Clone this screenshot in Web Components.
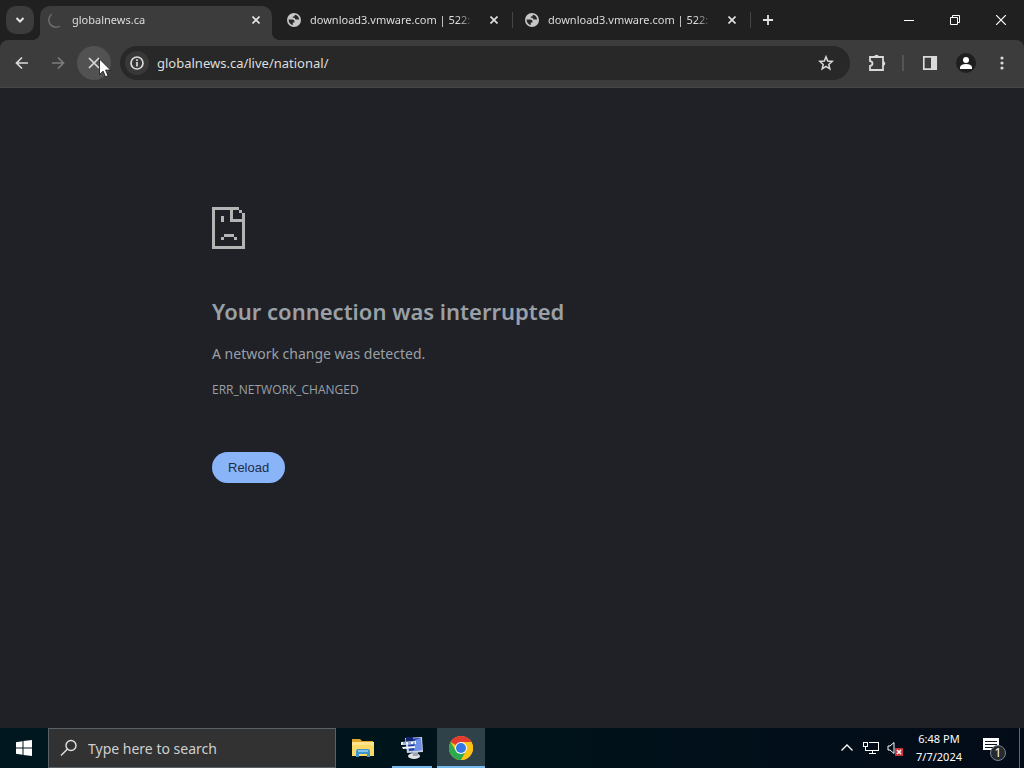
<!DOCTYPE html>
<html lang="en">
<head>
<meta charset="utf-8">
<title>globalnews.ca</title>
<style>
    html, body {
        height: 100%;
        margin: 0;
    }

    body {
        overflow: hidden;
        background-color: #202124;
        font-family: "Noto Sans", "Open Sans", sans-serif;
    }
</style>
</head>
<body>
<desktop-screen>
    <browser-window>
        <tab-strip slot="tabs">
            <browser-tab title="globalnews.ca" active loading></browser-tab>
            <browser-tab title="download3.vmware.com | 522:"></browser-tab>
            <browser-tab title="download3.vmware.com | 522:"></browser-tab>
        </tab-strip>
        <browser-toolbar slot="toolbar" url="globalnews.ca/live/national/"></browser-toolbar>
        <error-page heading="Your connection was interrupted" code="ERR_NETWORK_CHANGED">A network change was detected.</error-page>
    </browser-window>
    <task-bar slot="taskbar">
        <task-button label="File Explorer">
            <svg width="22" height="20" viewBox="0 0 22 20">
                <path d="M0 1h8l2 2h11v4H0z" fill="#e0a52b"/>
                <path d="M0 4h22v14H0z" fill="#fbd967"/>
                <path d="M0 4h22v3H0z" fill="#fde58f"/>
                <path d="M4 19v-6q0-2 2-2h10q2 0 2 2v6h-3v-3H7v3z" fill="#3f94cf"/>
                <path d="M6 12h10v2H6z" fill="#82c4e8"/>
            </svg>
        </task-button>
        <task-button label="Remote Desktop" running>
            <svg width="24" height="24" viewBox="0 0 24 24">
                <ellipse cx="14" cy="20" rx="6" ry="3" fill="#e0e3e6"/>
                <path d="M12 15l6-1v6h-5z" fill="#9ca5b0"/>
                <path d="M5 2l17-1 1 15-16 1z" fill="#c5cfe6"/>
                <path d="M7 3l13-1 1 12-12 1z" fill="#1c3ea8"/>
                <path d="M15 4l6-2 1 12-8 1z" fill="#6d90e4"/>
                <path d="M6 1h7v5H6z" fill="#10246f"/>
                <path d="M1 6l15-1v3L1 9zM2 11l13-1v2L3 13z" fill="#eef3fc"/>
                <path d="M3 7h3M8 7h3M13 7h2" stroke="#3d61bb"/>
            </svg>
        </task-button>
        <task-button label="Google Chrome" running active>
            <svg width="24" height="24" viewBox="0 0 24 24">
                <circle cx="12" cy="12" r="12" fill="#fbc116"/>
                <path d="M12 12L1.6 6A12 12 0 0 1 22.4 6H12z" fill="#e33b2e"/>
                <path d="M1.6 6A12 12 0 0 0 12 24l5.2-9L12 12 6.8 15z" fill="#2da94f"/>
                <path d="M22.4 6H12l5.2 9L12 24A12 12 0 0 0 22.4 6z" fill="#fbc116"/>
                <circle cx="12" cy="12" r="6" fill="#fff"/>
                <circle cx="12" cy="12" r="5" fill="#3478e5"/>
            </svg>
        </task-button>
    </task-bar>
    <mouse-pointer slot="pointer"></mouse-pointer>
</desktop-screen>

<script>
/**
 * DesktopScreen - Stacks the open window above the task bar
 */
class DesktopScreen extends HTMLElement {
    constructor() {
        super();
        this.attachShadow({ mode: 'open' });
        this.shadowRoot.innerHTML = `
            <style>
                :host {
                    display: flex;
                    flex-direction: column;
                    position: relative;
                    height: 100%;
                }

                .workspace {
                    display: flex;
                    flex-direction: column;
                    flex: 1;
                    min-height: 0;
                }
            </style>
            <div class="workspace"><slot></slot></div>
            <slot name="taskbar"></slot>
            <slot name="pointer"></slot>
        `;
    }
}

/**
 * BrowserWindow - Tabs, toolbar and the page below them
 */
class BrowserWindow extends HTMLElement {
    constructor() {
        super();
        this.attachShadow({ mode: 'open' });
        this.shadowRoot.innerHTML = `
            <style>
                :host {
                    display: flex;
                    flex-direction: column;
                    flex: 1;
                    min-height: 0;
                    background-color: #202020;
                }

                main {
                    flex: 1;
                    overflow: hidden;
                    background-color: #202127;
                }
            </style>
            <slot name="tabs"></slot>
            <slot name="toolbar"></slot>
            <main><slot></slot></main>
        `;
    }
}

/**
 * TabStrip - Row of tabs with the window controls at the right
 */
class TabStrip extends HTMLElement {
    constructor() {
        super();
        this.attachShadow({ mode: 'open' });
        this.shadowRoot.innerHTML = `
            <style>
                :host {
                    display: flex;
                    align-items: flex-start;
                    height: 40px;
                    background-color: #202020;
                }

                button {
                    display: flex;
                    align-items: center;
                    justify-content: center;
                    flex: none;
                    padding: 0;
                    border: none;
                    background-color: transparent;
                    color: #e3e3e3;
                }

                svg {
                    fill: none;
                    stroke: currentColor;
                }

                .search {
                    width: 28px;
                    height: 28px;
                    margin: 6px;
                    border-radius: 10px;
                    background-color: #3c3c3c;
                }

                .tabs {
                    display: flex;
                    gap: 6px;
                    min-width: 0;
                    padding-top: 6px;
                }

                .new-tab {
                    width: 28px;
                    height: 28px;
                    margin: 6px;
                }

                .controls {
                    display: flex;
                    margin-left: auto;
                }

                .controls button {
                    width: 46px;
                    height: 40px;
                    color: #ffffff;
                }
            </style>
            <button class="search" aria-label="Search tabs">
                <svg width="10" height="8" viewBox="0 0 10 8" stroke-width="2"><path d="M1.5 2L5 5.5 8.5 2"/></svg>
            </button>
            <div class="tabs"><slot></slot></div>
            <button class="new-tab" aria-label="New tab">
                <svg width="12" height="12" viewBox="0 0 12 12" stroke-width="1.8"><path d="M6 1v10M1 6h10"/></svg>
            </button>
            <div class="controls">
                <button aria-label="Minimize">
                    <svg width="10" height="10" viewBox="0 0 10 10"><path d="M0 5.5h10"/></svg>
                </button>
                <button aria-label="Restore">
                    <svg width="10" height="10" viewBox="0 0 10 10"><path d="M.5 2.5h7v7h-7zM2.5 2.500v-2h7v7h-2"/></svg>
                </button>
                <button aria-label="Close">
                    <svg width="10" height="10" viewBox="0 0 10 10" stroke-width="1.2"><path d="M0 0l10 10M10 0L0 10"/></svg>
                </button>
            </div>
        `;
    }
}

/**
 * BrowserTab - One tab: icon or spinner, title, close button
 */
class BrowserTab extends HTMLElement {
    constructor() {
        super();
        this.attachShadow({ mode: 'open' });
    }

    connectedCallback() {
        this._render();
    }

    _render() {
        const title = this.getAttribute('title') || '';
        const loading = this.hasAttribute('loading');

        this.shadowRoot.innerHTML = `
            <style>
                :host {
                    display: flex;
                    align-items: center;
                    flex: 0 1 232px;
                    width: 232px;
                    min-width: 0;
                    height: 28px;
                    padding: 0 8px;
                    box-sizing: border-box;
                    position: relative;
                    color: #dcdcdc;
                    font-size: 11px;
                }

                :host([active]) {
                    height: 34px;
                    padding-bottom: 6px;
                    border-radius: 10px 10px 0 0;
                    background-color: #3c3c3c;
                }

                /* Flared feet of the active tab */
                :host([active])::before,
                :host([active])::after {
                    content: "";
                    position: absolute;
                    bottom: 0;
                    width: 8px;
                    height: 8px;
                }

                :host([active])::before {
                    right: 100%;
                    background: radial-gradient(circle at 0 0, transparent 8px, #3c3c3c 8px);
                }

                :host([active])::after {
                    left: 100%;
                    background: radial-gradient(circle at 100% 0, transparent 8px, #3c3c3c 8px);
                }

                /* Divider on the right of an inactive tab */
                :host(:not([active]))::after {
                    content: "";
                    position: absolute;
                    left: calc(100% + 2px);
                    top: 6px;
                    width: 1px;
                    height: 16px;
                    background-color: #454545;
                }

                .icon {
                    flex: none;
                    margin-right: 8px;
                }

                .title {
                    flex: 1;
                    overflow: hidden;
                    white-space: nowrap;
                    line-height: 18px;
                    -webkit-mask-image: linear-gradient(to left, transparent, #000 16px);
                    mask-image: linear-gradient(to left, transparent, #000 16px);
                }

                button {
                    display: flex;
                    align-items: center;
                    justify-content: center;
                    flex: none;
                    width: 16px;
                    height: 16px;
                    margin-left: 12px;
                    padding: 0;
                    border: none;
                    background-color: transparent;
                    color: #e3e3e3;
                }
            </style>
            ${loading ? `
                <svg class="icon" width="16" height="16" viewBox="0 0 16 16" fill="none" stroke="#6c6c6c" stroke-width="1.5">
                    <path d="M4 2A7 7 0 0 0 12 14"/>
                </svg>
            ` : `
                <svg class="icon" width="16" height="16" viewBox="0 0 16 16">
                    <circle cx="8" cy="8" r="7" fill="#c7c7c7"/>
                    <path d="M2.500 7.500h4q2 0 2 2v1H6.800V13q-3.800-.6-4.300-5.500zM9 2.800q3.500.7 4.200 4.700h-3.700l-1-1.800H6.800V4.500h1.400z" fill="#292929"/>
                </svg>
            `}
            <span class="title">${title}</span>
            <button aria-label="Close tab">
                <svg width="8" height="8" viewBox="0 0 8 8" stroke="currentColor" stroke-width="1.6"><path d="M.5.5l7 7M7.5.5l-7 7"/></svg>
            </button>
        `;
    }
}

/**
 * ToolButton - Round icon button; the icon goes in the slot
 */
class ToolButton extends HTMLElement {
    constructor() {
        super();
        this.attachShadow({ mode: 'open' });
        this.shadowRoot.innerHTML = `
            <style>
                :host {
                    display: block;
                    flex: none;
                    color: #dadada;
                }

                :host([disabled]) {
                    color: #7d7d7d;
                }

                button {
                    display: flex;
                    align-items: center;
                    justify-content: center;
                    width: 34px;
                    height: 34px;
                    padding: 0;
                    border: none;
                    border-radius: 50%;
                    background-color: transparent;
                    color: inherit;
                }

                :host([hovered]) button {
                    background-color: #525252;
                }
            </style>
            <button aria-label="${this.getAttribute('label') || ''}"><slot></slot></button>
        `;
        this.shadowRoot.querySelector('button').disabled = this.hasAttribute('disabled');
    }
}

/**
 * BrowserToolbar - Navigation buttons, address box and browser actions
 */
class BrowserToolbar extends HTMLElement {
    constructor() {
        super();
        this.attachShadow({ mode: 'open' });
    }

    connectedCallback() {
        this._render();
    }

    _render() {
        const url = this.getAttribute('url') || '';

        this.shadowRoot.innerHTML = `
            <style>
                :host {
                    display: flex;
                    align-items: center;
                    gap: 2px;
                    height: 48px;
                    padding: 0 5px 1px;
                    box-sizing: border-box;
                    border-bottom: 1px solid #474747;
                    border-radius: 8px 8px 0 0;
                    background-color: #3c3c3c;
                }

                .address {
                    display: flex;
                    align-items: center;
                    flex: 1;
                    min-width: 0;
                    height: 34px;
                    margin: 0 8px 0 7px;
                    padding: 0 7px 0 5px;
                    box-sizing: border-box;
                    border-radius: 17px;
                    background-color: #282828;
                }

                .address button {
                    display: flex;
                    align-items: center;
                    justify-content: center;
                    flex: none;
                    width: 24px;
                    height: 24px;
                    padding: 0;
                    border: none;
                    border-radius: 50%;
                    background-color: transparent;
                    color: #dadada;
                }

                .address .site-info {
                    background-color: #383838;
                }

                .address .star {
                    width: 34px;
                }

                input {
                    flex: 1;
                    min-width: 0;
                    padding: 0 8px;
                    border: none;
                    outline: none;
                    background-color: transparent;
                    color: #dedede;
                    font-family: inherit;
                    font-size: 13px;
                }

                .divider {
                    width: 2px;
                    height: 16px;
                    margin: 0 7px 0 6px;
                    background-color: #555555;
                }

                svg {
                    display: block;
                    fill: none;
                    stroke: currentColor;
                }

                .solid {
                    stroke: none;
                }
            </style>
            <tool-button label="Back">
                <svg width="14" height="14" viewBox="0 0 14 14" stroke-width="1.7"><path d="M13 7H2M7 1.500L1.500 7 7 12.500"/></svg>
            </tool-button>
            <tool-button label="Forward" disabled>
                <svg width="14" height="14" viewBox="0 0 14 14" stroke-width="1.7"><path d="M1 7h11M7 1.500L12.500 7 7 12.500"/></svg>
            </tool-button>
            <tool-button label="Stop" hovered>
                <svg width="12" height="12" viewBox="0 0 12 12" stroke-width="1.7"><path d="M1 1l10 10M11 1L1 11"/></svg>
            </tool-button>
            <div class="address">
                <button class="site-info" aria-label="View site information">
                    <svg width="14" height="14" viewBox="0 0 14 14" stroke-width="1.7">
                        <circle cx="7" cy="7" r="6"/>
                        <path d="M7 6v4.500M7 3.300v1.700"/>
                    </svg>
                </button>
                <input type="text" aria-label="Address and search bar" value="${url}" spellcheck="false">
                <button class="star" aria-label="Bookmark this tab">
                    <svg width="16" height="16" viewBox="0 0 16 16" stroke-width="1.5">
                        <path d="M8 1.800l1.700 4.200 4.500.4-3.400 3 1 4.400L8 11.400l-3.800 2.400 1-4.400-3.400-3L6.300 6z"/>
                    </svg>
                </button>
            </div>
            <tool-button label="Extensions">
                <svg width="18" height="18" viewBox="0 0 18 18" stroke-width="1.8">
                    <path d="M2 7V3h13v13H2v-4q2.500-.5 2.500-2.500T2 7z"/>
                    <path class="solid" d="M6.200 3a2.200 2.200 0 0 1 4.600 0zM15 7.200a2.200 2.200 0 0 1 0 4.600z" fill="currentColor"/>
                </svg>
            </tool-button>
            <span class="divider"></span>
            <tool-button label="Side panel">
                <svg width="16" height="16" viewBox="0 0 16 16" stroke-width="1.7">
                    <path d="M1.800 1.800h12.400v12.400H1.800z"/>
                    <path class="solid" d="M9 2h5v12H9z" fill="currentColor"/>
                </svg>
            </tool-button>
            <tool-button label="Profile">
                <svg class="solid" width="20" height="20" viewBox="0 0 20 20">
                    <circle cx="10" cy="10" r="10" fill="#1f1f1f"/>
                    <circle cx="10" cy="7" r="3" fill="#fff"/>
                    <path d="M4 16v-2q1-3 6-3t6 3v2z" fill="#fff"/>
                </svg>
            </tool-button>
            <tool-button label="Menu">
                <svg class="solid" width="4" height="16" viewBox="0 0 4 16">
                    <g fill="currentColor"><circle cx="2" cy="3" r="1.600"/><circle cx="2" cy="8" r="1.600"/><circle cx="2" cy="13" r="1.600"/></g>
                </svg>
            </tool-button>
        `;
    }
}

/**
 * ErrorPage - Network error message; the summary goes in the slot
 */
class ErrorPage extends HTMLElement {
    constructor() {
        super();
        this.attachShadow({ mode: 'open' });
    }

    connectedCallback() {
        this._render();
        this.shadowRoot.querySelector('button').addEventListener('click', () => {
            window.location.reload();
        });
    }

    _render() {
        this.shadowRoot.innerHTML = `
            <style>
                :host {
                    display: block;
                    max-width: 600px;
                    margin: 0 auto;
                    padding-top: 119px;
                    color: #9aa0a6;
                }

                svg {
                    display: block;
                }

                h1 {
                    margin: 46px 0 0;
                    font-size: 22px;
                    font-weight: 600;
                    line-height: 32px;
                }

                p {
                    margin: 17px 0 0;
                    font-size: 14px;
                    line-height: 20px;
                }

                .code {
                    margin-top: 16px;
                    font-family: "Open Sans", "Noto Sans", sans-serif;
                    font-size: 12px;
                }

                button {
                    height: 31px;
                    margin-top: 52px;
                    padding: 0 16px;
                    border: none;
                    border-radius: 16px;
                    background-color: #8ab4f8;
                    color: #202d47;
                    font-family: "Liberation Sans", sans-serif;
                    font-size: 13px;
                    line-height: 31px;
                }
            </style>
            <svg width="34" height="42" viewBox="0 0 34 42" fill="#b4b4b4" shape-rendering="crispEdges">
                <path d="M0 0h27v3H3v36h27V15H18V3h3v9h9V6h-3V3h3v3h3v36H0z"/>
                <path d="M9 9h3v6H9zM9 30h3v3H9zM12 27h10v3H12zM22 30h3v3h-3z"/>
            </svg>
            <h1>${this.getAttribute('heading') || ''}</h1>
            <p><slot></slot></p>
            <p class="code">${this.getAttribute('code') || ''}</p>
            <button>Reload</button>
        `;
    }
}

/**
 * TaskButton - Pinned or running program on the task bar
 */
class TaskButton extends HTMLElement {
    constructor() {
        super();
        this.attachShadow({ mode: 'open' });
        this.shadowRoot.innerHTML = `
            <style>
                :host {
                    display: block;
                }

                button {
                    display: flex;
                    align-items: center;
                    justify-content: center;
                    width: 48px;
                    height: 40px;
                    padding: 0;
                    border: none;
                    background: none;
                }

                :host([running]) button {
                    background: linear-gradient(#76b9ed, #76b9ed) center bottom / 40px 2px no-repeat;
                }

                :host([active]) button {
                    background-color: #2f4149;
                    background-size: 48px 2px;
                }
            </style>
            <button aria-label="${this.getAttribute('label') || ''}"><slot></slot></button>
        `;
    }
}

/**
 * TaskBar - Start button, search box, programs and the tray
 */
class TaskBar extends HTMLElement {
    constructor() {
        super();
        this.attachShadow({ mode: 'open' });
        this.shadowRoot.innerHTML = `
            <style>
                :host {
                    display: flex;
                    flex: none;
                    height: 40px;
                    background: linear-gradient(to right, #001720, #00131b 50%, #030b18);
                    color: #ffffff;
                }

                button {
                    display: flex;
                    align-items: center;
                    justify-content: center;
                    flex: none;
                    padding: 0;
                    border: none;
                    background: none;
                    color: inherit;
                    font-family: inherit;
                }

                .start {
                    width: 48px;
                }

                .search {
                    display: flex;
                    align-items: center;
                    flex: 0 1 288px;
                    gap: 10px;
                    padding: 0 11px;
                    box-sizing: border-box;
                    border: 1px solid #596166;
                    background-color: #323232;
                }

                input {
                    flex: 1;
                    min-width: 0;
                    padding: 0;
                    border: none;
                    outline: none;
                    background: none;
                    color: #ffffff;
                    font-family: inherit;
                    font-size: 14px;
                }

                input::placeholder {
                    color: #cfcfcf;
                }

                .programs {
                    display: flex;
                    gap: 1px;
                    padding-left: 3px;
                }

                .tray {
                    display: flex;
                    margin-left: auto;
                }

                .tray button {
                    width: 24px;
                }

                .tray .clock {
                    flex-direction: column;
                    width: 64px;
                    font-size: 11px;
                    line-height: 18px;
                }

                .tray .notifications {
                    width: 48px;
                }

                .tray .show-desktop {
                    width: 5px;
                    border-left: 1px solid #60686f;
                }
            </style>
            <button class="start" aria-label="Start">
                <svg width="16" height="16" viewBox="0 0 16 16" fill="#fff">
                    <path d="M0 2.200L6.500 1.300V7.500H0zM7.500 1.100L16 0V7.500H7.500zM0 8.500H6.500V14.700L0 13.800zM7.500 8.500H16V16L7.500 14.900z"/>
                </svg>
            </button>
            <label class="search">
                <svg width="18" height="18" viewBox="0 0 18 18" fill="none" stroke="#e0e0e0" stroke-width="1.4">
                    <circle cx="11" cy="6.500" r="5"/>
                    <path d="M7.500 10L1 16.500"/>
                </svg>
                <input type="text" placeholder="Type here to search" aria-label="Search">
            </label>
            <div class="programs"><slot></slot></div>
            <div class="tray">
                <button aria-label="Show hidden icons">
                    <svg width="12" height="8" viewBox="0 0 12 8" fill="none" stroke="#fff" stroke-width="1.3"><path d="M.5 6.500L6 1l5.500 5.500"/></svg>
                </button>
                <button aria-label="Network">
                    <svg width="17" height="14" viewBox="0 0 17 14" fill="none" stroke="#fff" shape-rendering="crispEdges">
                        <path d="M6 1.500h9.500v8H2.500v-4M9.500 9.500v3M6 12.500h7M.5 1.500h4v4h-4z"/>
                    </svg>
                </button>
                <button aria-label="Volume muted">
                    <svg width="17" height="15" viewBox="0 0 17 15" fill="none">
                        <path d="M1 5h2l4-3.500v11L3 9H1z" stroke="#fff"/>
                        <path d="M8 7h8v8H8z" fill="#c9343c"/>
                        <path d="M10 9l4 4M14 9l-4 4" stroke="#fff" stroke-width="1.5"/>
                    </svg>
                </button>
                <button class="clock" aria-label="Clock"><span>6:48 PM</span><span>7/7/2024</span></button>
                <button class="notifications" aria-label="1 new notification">
                    <svg width="26" height="26" viewBox="0 0 26 26">
                        <path d="M1 3h16v12h-4v4l-4-4H1z" fill="#fff"/>
                        <path d="M3 6.500h12M3 9.500h12M3 12.500h8" stroke="#0b141c"/>
                        <circle cx="16" cy="18" r="7.500" fill="#242a31" stroke="#7c8287"/>
                        <text x="16" y="22" fill="#fff" font-size="12" text-anchor="middle">1</text>
                    </svg>
                </button>
                <button class="show-desktop" aria-label="Show desktop"></button>
            </div>
        `;
    }
}

/**
 * MousePointer - Arrow floating over the toolbar
 */
class MousePointer extends HTMLElement {
    constructor() {
        super();
        this.attachShadow({ mode: 'open' });
        this.shadowRoot.innerHTML = `
            <style>
                :host {
                    display: block;
                    position: absolute;
                    left: 99px;
                    top: 58px;
                    pointer-events: none;
                }
            </style>
            <svg width="13" height="20" viewBox="0 0 13 20">
                <path d="M.5 1v15.500l3.600-3.400 2.400 5.600 2.500-1-2.400-5.600h5z" fill="#fff" stroke="#111" stroke-width=".8"/>
            </svg>
        `;
    }
}

// Register the web components
customElements.define('tool-button', ToolButton);
customElements.define('browser-tab', BrowserTab);
customElements.define('tab-strip', TabStrip);
customElements.define('browser-toolbar', BrowserToolbar);
customElements.define('error-page', ErrorPage);
customElements.define('browser-window', BrowserWindow);
customElements.define('task-button', TaskButton);
customElements.define('task-bar', TaskBar);
customElements.define('mouse-pointer', MousePointer);
customElements.define('desktop-screen', DesktopScreen);
</script>
</body>
</html>
